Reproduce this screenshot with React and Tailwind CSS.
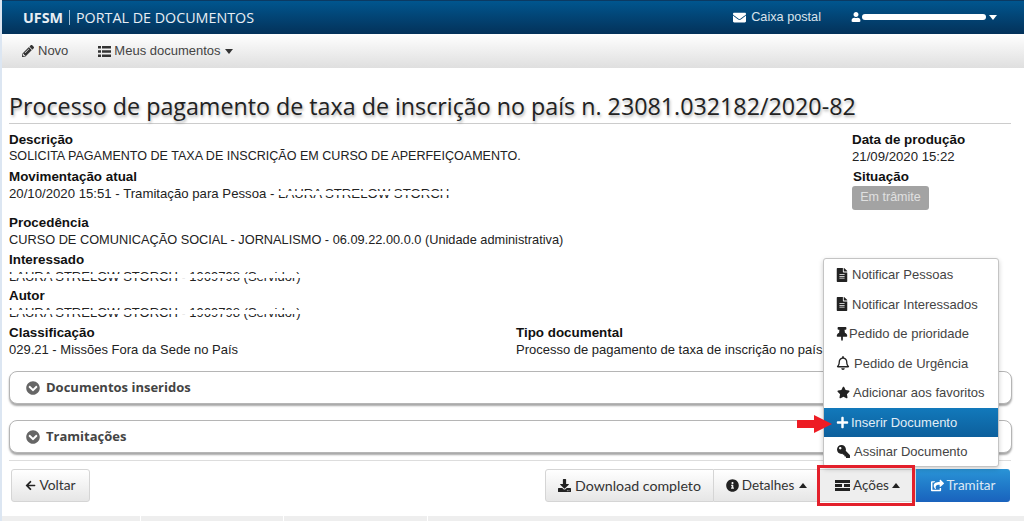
import { FaPencilAlt, FaEnvelope, FaUser, FaChevronCircleDown, FaArrowLeft, FaDownload, FaInfoCircle, FaShareSquare, FaFileAlt, FaThumbtack, FaRegBell, FaStar, FaPlus, FaKey } from "react-icons/fa";

const menuItems = [
  { icon: FaFileAlt, label: "Notificar Pessoas", cls: "text-[14px] -ml-[2px] mr-[3px] text-[#222]" },
  { icon: FaFileAlt, label: "Notificar Interessados", cls: "text-[14px] -ml-[2px] mr-[3px] text-[#222]" },
  { icon: FaThumbtack, label: "Pedido de prioridade", cls: "text-[14px] -ml-[2px] text-[#222]" },
  { icon: FaRegBell, label: "Pedido de Urgência", cls: "text-[14px] -ml-[1px] mr-[4px] text-[#222]" },
  { icon: FaStar, label: "Adicionar aos favoritos", cls: "text-[13px] mr-[3px] text-[#222]" },
  { icon: FaPlus, label: "Inserir Documento", cls: "text-[13px] -ml-[1px] mr-[2px] text-white", active: true },
  { icon: FaKey, label: "Assinar Documento", cls: "text-[13px] mr-[4px] text-[#222] -scale-x-100" },
];

const Field = ({ label, children, className = "", valueClass = "text-[13px]" }) => (
  <div className={className}>
    <div className="font-bold text-[13.4px] text-[#111] h-[17px] leading-[17px]">{label}</div>
    <div className={`h-[17px] leading-[17px] text-[#222] ${valueClass}`}>{children}</div>
  </div>
);

const Redacted = ({ children }) => (
  <span className="relative inline-block">
    {children}
    <span className="absolute left-0 right-0 top-[6px] h-[4px] bg-white" />
  </span>
);

const Panel = ({ title }) => (
  <div className="h-[33px] bg-white border border-[#b5b5b5] rounded-lg shadow-[0_2px_2px_rgba(0,0,0,0.35)] flex items-center pl-[16px] gap-[6px] font-['Open_Sans',sans-serif] text-[13px] font-bold text-[#444]">
    <FaChevronCircleDown className="text-[#666] text-[14px]" />
    {title}
  </div>
);

const ListIcon = () => (
  <svg width="13" height="11" viewBox="0 0 13 11" fill="#333">
    <path d="M0 0h3v2.4H0zM4 0h9v2.4H4zM0 4.3h3v2.4H0zM4 4.3h9v2.4H4zM0 8.6h3V11H0zM4 8.6h9V11H4z" />
  </svg>
);

const StackIcon = () => (
  <svg width="15" height="11" viewBox="0 0 15 11" fill="#222">
    <path d="M0 0h15v3H0zM0 4h7v3H0zM9 4h6v3H9zM0 8h15v3H0z" />
  </svg>
);

const CaretDown = ({ color = "border-t-[#333]" }) => (
  <span className={`w-0 h-0 border-x-[4.5px] border-x-transparent border-t-[5px] ${color}`} />
);

const CaretUp = () => (
  <span className="w-0 h-0 border-x-[4.5px] border-x-transparent border-b-[5px] border-b-[#222]" />
);

const btn = "h-[33px] flex items-center border border-[#d5d5d5] bg-gradient-to-b from-white to-[#e6e6e6] text-[#333] font-['Lato',sans-serif]";

export default function App() {
  return (
    <div className="relative w-[1024px] h-[521px] overflow-hidden bg-white font-['Liberation_Sans',sans-serif] text-[13px] border-l-2 border-[#dce6f2]">
      <header className="h-[34px] border-t border-[#0b3a63] bg-gradient-to-b from-[#00568f] to-[#03325a] flex items-center text-white">
        <div className="ml-[21px] flex items-center font-['Open_Sans',sans-serif] text-[14.3px] text-[#e8eef4]">
          <span className="font-bold">UFSM</span>
          <span className="mx-[6px] w-px h-[15px] bg-[#9fc0d8]" />
          <span>PORTAL DE DOCUMENTOS</span>
        </div>
        <div className="ml-auto flex items-center text-[12.7px] text-[#d9e3ec]">
          <FaEnvelope className="text-[13px] text-white" />
          <span className="ml-[5px]">Caixa postal</span>
          <div className="relative ml-[30px] w-[146px] h-[12px] flex items-center">
            <FaUser className="text-white text-[10px]" />
            <span className="ml-[1px] w-[124px] h-[6px] bg-white rounded-sm" />
            <span className="ml-[3px] flex"><CaretDown color="border-t-white" /></span>
          </div>
          <span className="w-[27px]" />
        </div>
      </header>

      <nav className="h-[34px] bg-gradient-to-b from-white to-[#dfdfdf] flex items-center text-[13px] text-[#444]">
        <div className="ml-[20px] flex items-center gap-[4px]">
          <FaPencilAlt className="text-[12px] text-[#333]" />
          <span>Novo</span>
        </div>
        <div className="ml-[30px] flex items-center gap-[4px]">
          <ListIcon />
          <span className="-ml-[1px]">Meus documentos</span>
          <CaretDown />
        </div>
      </nav>

      <main className="pl-[7px] w-[1010px]">
        <h1 className="mt-[22px] h-[33px] w-[1002px] leading-[33px] font-['Open_Sans',sans-serif] text-[23.25px] text-[#222] [text-shadow:1px_2px_3px_rgba(0,0,0,0.3)] border-b border-[#ccc] box-content">
          Processo de pagamento de taxa de inscrição no país n. 23081.032182/2020-82
        </h1>

        <div className="mt-[7px] flex">
          <div className="w-[843px]">
            <Field label="Descrição" valueClass="text-[12.56px]">SOLICITA PAGAMENTO DE TAXA DE INSCRIÇÃO EM CURSO DE APERFEIÇOAMENTO.</Field>
            <Field label="Movimentação atual" className="mt-[3px]" valueClass="text-[13.2px]">
              20/10/2020 15:51 - Tramitação para Pessoa - <Redacted>LAURA STRELOW STORCH</Redacted>
            </Field>
            <Field label="Procedência" className="mt-[12px]" valueClass="text-[12.77px]">CURSO DE COMUNICAÇÃO SOCIAL - JORNALISMO - 06.09.22.00.0.0 (Unidade administrativa)</Field>
            <Field label="Interessado" className="mt-[3px]"><Redacted>LAURA STRELOW STORCH - 1969798 (Servidor)</Redacted></Field>
            <Field label="Autor" className="mt-[2px]"><Redacted>LAURA STRELOW STORCH - 1969798 (Servidor)</Redacted></Field>
            <div className="mt-[3px] flex">
              <Field label="Classificação" className="w-[507px]">029.21 - Missões Fora da Sede no País</Field>
              <Field label="Tipo documental" className="whitespace-nowrap">Processo de pagamento de taxa de inscrição no país</Field>
            </div>
          </div>
          <div>
            <Field label="Data de produção" valueClass="text-[13.2px]">21/09/2020 15:22</Field>
            <div className="mt-[3px] ml-[1px] font-bold text-[13.4px] text-[#111] h-[17px] leading-[17px]">Situação</div>
            <span className="mt-[1px] inline-block h-[24px] w-[77px] leading-[23px] text-center rounded-[3px] bg-[#a3a3a3] text-[#e0e0e0] text-[12.56px]">Em trâmite</span>
          </div>
        </div>

        <div className="mt-[13px] flex flex-col gap-[16px] w-[1003px]">
          <Panel title="Documentos inseridos" />
          <Panel title="Tramitações" />
        </div>
        <div className="mt-[7px] h-px w-[1002px] bg-[#ddd]" />

        <div className="mt-[8px] flex pl-[2px] pr-[2px]">
          <button className={`${btn} w-[79px] justify-center gap-[3px] rounded-[3px] text-[13.8px]`}>
            <FaArrowLeft className="text-[11px] text-[#222]" /> Voltar
          </button>
          <div className="ml-auto flex">
            <button className={`${btn} w-[169px] justify-center gap-[4px] rounded-l-[3px] text-[14.2px]`}>
              <FaDownload className="text-[13px] text-[#222]" /> Download completo
            </button>
            <button className={`${btn} w-[106px] justify-center border-l-0 text-[13.5px]`}>
              <FaInfoCircle className="text-[13px] text-[#222] mr-[3px]" /> Detalhes <span className="ml-[5px] flex"><CaretUp /></span>
            </button>
            <button className={`${btn} w-[96px] justify-center border-l-0 bg-none bg-[#eee] text-[13.5px]`}>
              <span className="mr-[3px] flex"><StackIcon /></span> Ações <span className="ml-[3px] flex"><CaretUp /></span>
            </button>
            <button className="h-[33px] w-[94px] flex items-center justify-center gap-[3px] rounded-r-[3px] bg-gradient-to-b from-[#2a94d6] to-[#1a62bd] text-[#dce9f5] text-[13.5px] font-['Lato',sans-serif]">
              <FaShareSquare className="text-[13px] text-white" /> Tramitar
            </button>
          </div>
        </div>
      </main>

      <div className="absolute left-0 right-0 bottom-0 h-[5px] bg-[#eeeeee] flex">
        <span className="ml-[138px] w-px bg-white" />
        <span className="ml-[142px] w-px bg-white" />
        <span className="ml-[143px] w-px bg-white" />
      </div>

      <ul className="absolute left-[821px] top-[258px] w-[176px] h-[209px] py-[1px] bg-white border border-[#c4c4c4] rounded-[3px] shadow-[0_2px_5px_rgba(0,0,0,0.2)] text-[#444] text-[13px]">
        {menuItems.map(({ icon: Icon, label, cls, active }) => (
          <li key={label} className={`h-[29.5px] flex items-center pl-[13px] ${active ? "bg-gradient-to-b from-[#1279bb] to-[#0d5f9c] text-[#e2edf6]" : ""}`}>
            <Icon className={cls} />
            <span>{label}</span>
          </li>
        ))}
      </ul>

      <svg className="absolute left-[795px] top-[415px]" width="36" height="18" viewBox="0 0 36 18">
        <path d="M0 5h17V0l18 9-18 9v-5H0z" fill="#ed1c24" />
      </svg>

      <div className="absolute left-[815px] top-[465px] w-[98px] h-[41px] border-[3px] border-[#e3202b]" />
    </div>
  );
}
